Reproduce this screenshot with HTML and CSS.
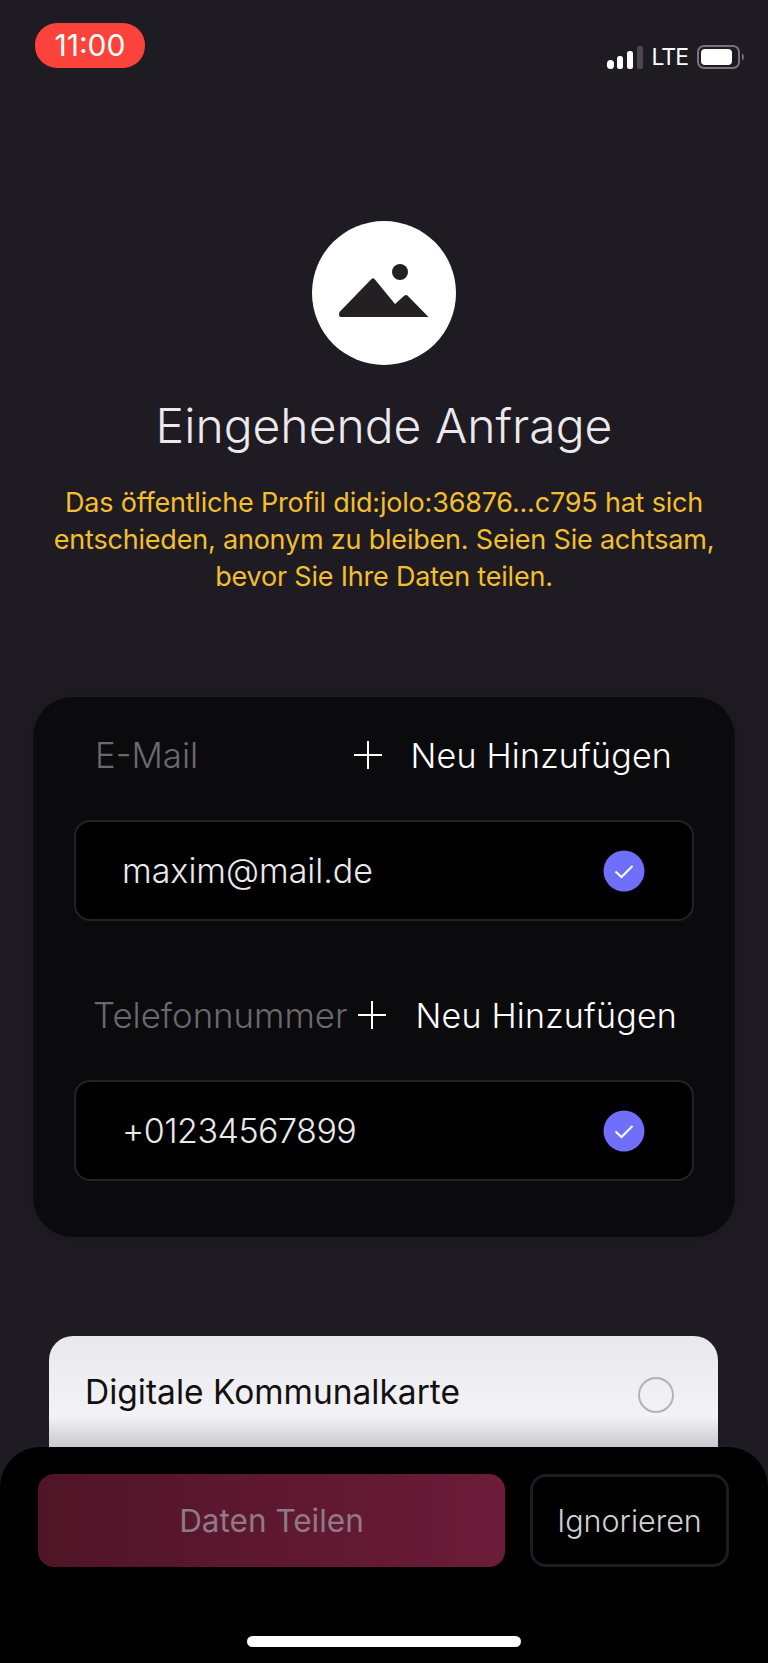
FILE: index.html
```html
<!DOCTYPE html>
<html lang="de">
<head>
    <meta charset="UTF-8">
    <meta name="viewport" content="width=device-width, initial-scale=1.0">
    <title>Eingehende Anfrage</title>
    <link rel="stylesheet" href="styles.css">
</head>
<body>
    <div class="status-bar">
        <div class="time-pill">11:00</div>
        <div class="status-icons">
            <svg class="signal" width="36" height="23" viewBox="0 0 36 23">
                <rect x="0" y="14" width="7" height="9" rx="3.500" fill="#fff"/>
                <rect x="10" y="10" width="6" height="13" rx="2.500" fill="#fff"/>
                <rect x="20" y="5" width="6" height="18" rx="2.500" fill="#fff"/>
                <rect x="30" y="0" width="6" height="23" rx="2" fill="#4a484d"/>
            </svg>
            <span class="lte">LTE</span>
            <svg class="battery" width="48" height="24" viewBox="0 0 48 24">
                <rect x="1" y="1" width="41" height="22" rx="6" fill="none" stroke="#77757b" stroke-width="2"/>
                <rect x="4" y="4" width="31" height="16" rx="4" fill="#fff"/>
                <path d="M45 8.500c2.500 1 2.500 6 0 7z" fill="#77757b"/>
            </svg>
        </div>
    </div>

    <div class="avatar">
        <svg width="92" height="56" viewBox="0 0 92 56">
            <circle cx="62" cy="10" r="8" fill="#231f22"/>
            <path d="M1.500 50 L33.500 17 Q35 15.500 36.500 17 L57 42 L66.500 33.500 Q68 32.500 69.500 33.500 L90.500 55 L3 55 Q1 55 1 53 Z" fill="#231f22"/>
        </svg>
    </div>

    <h1 class="title">Eingehende Anfrage</h1>
    <p class="warning">Das öffentliche Profil did:jolo:36876...c795 hat sich<br>entschieden, anonym zu bleiben. Seien Sie achtsam,<br>bevor Sie Ihre Daten teilen.</p>

    <div class="card">
        <div class="field-head">
            <span class="field-label">E-Mail</span>
            <div class="add-new">
                <svg class="plus" width="28" height="28" viewBox="0 0 28 28"><path d="M14 0v28M0 14h28" stroke="#fff" stroke-width="2"/></svg>
                <span>Neu Hinzufügen</span>
            </div>
        </div>
        <div class="input-box">
            <span>maxim@mail.de</span>
            <svg class="check" width="42" height="42" viewBox="0 0 42 42">
                <circle cx="21" cy="21" r="20.500" fill="#6f6ffb"/>
                <path d="M12.500 21.500l6 5.500 11-11" fill="none" stroke="#fff" stroke-width="2"/>
            </svg>
        </div>

        <div class="field-head second">
            <span class="field-label">Telefonnummer</span>
            <div class="add-new">
                <svg class="plus" width="28" height="28" viewBox="0 0 28 28"><path d="M14 0v28M0 14h28" stroke="#fff" stroke-width="2"/></svg>
                <span>Neu Hinzufügen</span>
            </div>
        </div>
        <div class="input-box">
            <span class="phone">+01234567899</span>
            <svg class="check" width="42" height="42" viewBox="0 0 42 42">
                <circle cx="21" cy="21" r="20.500" fill="#6f6ffb"/>
                <path d="M12.500 21.500l6 5.500 11-11" fill="none" stroke="#fff" stroke-width="2"/>
            </svg>
        </div>
    </div>

    <div class="doc-card">
        <span>Digitale Kommunalkarte</span>
        <div class="radio"></div>
    </div>

    <div class="sheet">
        <div class="actions">
            <button class="btn-share">Daten Teilen</button>
            <button class="btn-ignore">Ignorieren</button>
        </div>
        <div class="home-bar"></div>
    </div>
</body>
</html>
```

FILE: styles.css
```css
* {
    margin: 0;
    padding: 0;
    box-sizing: border-box;
    font-family: "Inter", "Open Sans", sans-serif;
}

body {
    width: 768px;
    height: 1663px;
    overflow: hidden;
    background: #1f1b22;
    color: #fff;
}

.status-bar {
    display: flex;
    justify-content: space-between;
    height: 221px;
    padding: 23px 23px 0 35px;
}

.time-pill {
    width: 110px;
    height: 45px;
    background: #fb433b;
    border-radius: 22px;
    font-size: 30px;
    line-height: 45px;
    text-align: center;
}

.status-icons {
    display: flex;
    align-items: center;
    gap: 9px;
    height: 24px;
    margin-top: 22px;
}

.lte {
    font-size: 23px;
    letter-spacing: -1px;
}

.avatar {
    display: flex;
    justify-content: center;
    align-items: center;
    width: 144px;
    height: 144px;
    margin: 0 auto;
    padding-bottom: 6px;
    background: #fff;
    border-radius: 50%;
}

.title {
    margin-top: 31px;
    font-size: 48px;
    font-weight: 300;
    line-height: 60px;
    text-align: center;
    color: #ece9ee;
}

.warning {
    margin-top: 28px;
    font-size: 27px;
    line-height: 37px;
    letter-spacing: -0.2px;
    text-align: center;
    color: #f3bf2e;
}

.card {
    width: 702px;
    height: 540px;
    margin: 102px 0 0 33px;
    padding: 36px 41px 0;
    background: #0b0a0d;
    border-radius: 40px;
    box-shadow: 0 0 30px rgba(0, 0, 0, 0.12);
}

.field-head {
    display: flex;
    justify-content: space-between;
    align-items: center;
    height: 44px;
    padding: 0 22px 0 21px;
}

.field-head.second {
    margin-top: 72px;
    padding: 0 17px 0 19px;
}

.field-label {
    font-size: 34.800px;
    font-weight: 350;
    color: #6a696e;
}

.add-new {
    display: flex;
    align-items: center;
    gap: 29px;
    font-size: 34px;
    font-weight: 350;
    letter-spacing: 0.2px;
}

.second .add-new {
    gap: 30px;
}

.input-box {
    display: flex;
    justify-content: space-between;
    align-items: center;
    height: 101px;
    margin-top: 43px;
    padding: 0 47px 0 46px;
    background: #000;
    border: 2px solid #242227;
    border-radius: 16px;
    font-size: 34px;
    font-weight: 350;
    color: #ebe9ec;
}

.phone {
    letter-spacing: -0.5px;
}

.doc-card {
    display: flex;
    justify-content: space-between;
    align-items: center;
    width: 669px;
    height: 111px;
    margin: 99px 0 0 49px;
    padding: 0 44px 0 36px;
    background: linear-gradient(#e9e8ec, #f3f2f6 72%, #c9c8cc);
    border-radius: 24px 24px 0 0;
    font-size: 33.500px;
    color: #111;
}

.radio {
    width: 36px;
    height: 36px;
    margin-top: 6px;
    border: 2px solid #b3b2b6;
    border-radius: 50%;
}

.sheet {
    height: 217px;
    padding: 27px 39px 0 38px;
    background: #000;
    border-radius: 40px 40px 0 0;
}

.actions {
    display: flex;
    gap: 25px;
    height: 93px;
}

.btn-share,
.btn-ignore {
    font-size: 30.500px;
    font-weight: 350;
    border-radius: 16px;
}

.btn-share {
    flex: 1;
    font-size: 31.500px;
    font-weight: 400;
    background: linear-gradient(90deg, #4f1427, #6c1c38);
    border: none;
    color: #8f7a85;
}

.btn-ignore {
    width: 199px;
    background: #000;
    border: 3px solid #1d1c21;
    color: #d2d1d4;
}

.home-bar {
    width: 274px;
    height: 11px;
    margin: 69px auto 0;
    background: #fff;
    border-radius: 6px;
}
```
